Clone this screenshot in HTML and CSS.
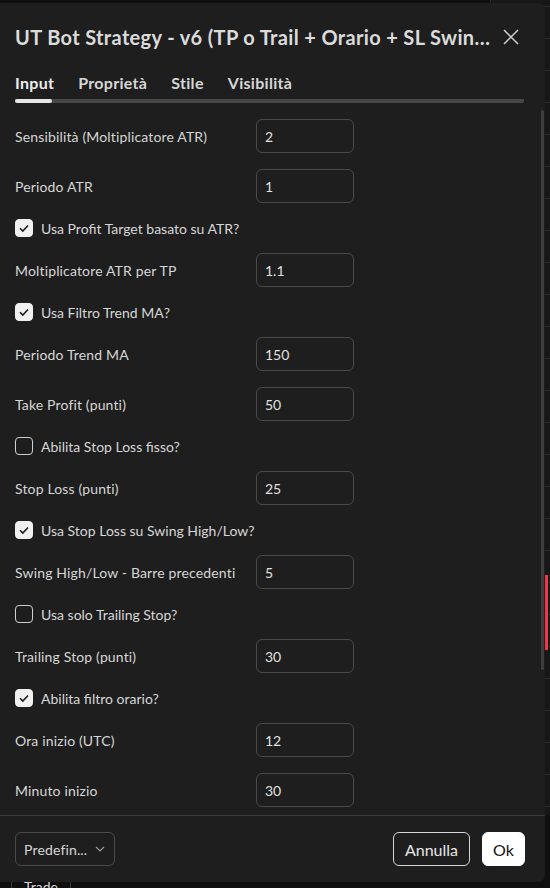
FILE: index.html
```html
<!DOCTYPE html>
<html lang="it">
<head>
    <meta charset="UTF-8">
    <title>Impostazioni - UT Bot Strategy</title>
    <link rel="stylesheet" href="styles.css">
</head>
<body>
<div class="chart">
    <div class="price-scale"></div>
    <span class="candle"></span>
    <div class="bottom-tabs">
        <span class="bottom-tab">Trade</span>
    </div>
</div>

<div class="dialog">
    <div class="head">
        <h1 class="title">UT Bot Strategy - v6 (TP o Trail + Orario + SL Swing High/Low)</h1>
        <button class="close" title="Chiudi">
            <svg width="16" height="16" viewBox="0 0 16 16"><path d="M1 1L15 15M15 1L1 15" stroke="currentColor" stroke-width="1.5" fill="none"/></svg>
        </button>
    </div>

    <div class="tabs">
        <span class="tab on">Input</span>
        <span class="tab">Proprietà</span>
        <span class="tab">Stile</span>
        <span class="tab">Visibilità</span>
    </div>

    <div class="body">
        <div class="row"><label>Sensibilità (Moltiplicatore ATR)</label><input class="field" value="2"></div>
        <div class="row"><label>Periodo ATR</label><input class="field" value="1"></div>
        <div class="check"><span class="box on"></span>Usa Profit Target basato su ATR?</div>
        <div class="row"><label>Moltiplicatore ATR per TP</label><input class="field" value="1.1"></div>
        <div class="check"><span class="box on"></span>Usa Filtro Trend MA?</div>
        <div class="row"><label>Periodo Trend MA</label><input class="field" value="150"></div>
        <div class="row"><label>Take Profit (punti)</label><input class="field" value="50"></div>
        <div class="check"><span class="box"></span>Abilita Stop Loss fisso?</div>
        <div class="row"><label>Stop Loss (punti)</label><input class="field" value="25"></div>
        <div class="check"><span class="box on"></span>Usa Stop Loss su Swing High/Low?</div>
        <div class="row"><label>Swing High/Low - Barre precedenti</label><input class="field" value="5"></div>
        <div class="check"><span class="box"></span>Usa solo Trailing Stop?</div>
        <div class="row"><label>Trailing Stop (punti)</label><input class="field" value="30"></div>
        <div class="check"><span class="box on"></span>Abilita filtro orario?</div>
        <div class="row"><label>Ora inizio (UTC)</label><input class="field" value="12"></div>
        <div class="row"><label>Minuto inizio</label><input class="field" value="30"></div>
        <div class="scrollbar"></div>
    </div>

    <div class="foot">
        <div class="select"><span class="select-text">Predefin...</span>
            <svg width="10" height="6" viewBox="0 0 10 6"><path d="M1 1L5 5L9 1" stroke="currentColor" stroke-width="1.2" fill="none"/></svg>
        </div>
        <span class="spacer"></span>
        <button class="btn">Annulla</button>
        <button class="btn primary">Ok</button>
    </div>
</div>
</body>
</html>
```

FILE: styles.css
```css
*{margin:0;padding:0;box-sizing:border-box;}
body{width:550px;height:888px;overflow:hidden;background:#0f0f0f;
    font-family:Lato,"Noto Sans",sans-serif;color:#d6d6d6;position:relative;}

/* chart behind the dialog */
.chart{height:888px;position:relative;display:flex;justify-content:flex-end;}
.price-scale{width:60px;height:815px;border-left:1px solid #2a2a2a;
    background:#171717 repeating-linear-gradient(to bottom,transparent 0,transparent 6px,#2e2e2e 6px,#2e2e2e 7px,transparent 7px,transparent 32px);}
.candle{position:absolute;left:545px;top:575px;width:3px;height:75px;background:#f23645;}
.bottom-tabs{position:absolute;left:0;right:0;top:872px;height:30px;background:#0f0f0f;display:flex;padding-left:11px;}
.bottom-tab{border-left:1px solid #3a3a3a;border-right:1px solid #3a3a3a;width:60px;padding-top:6px;
    text-align:center;font-size:14px;color:#d6d6d6;}

.dialog{position:absolute;left:0;top:3px;width:545px;height:879px;background:#1e1e1e;
    border-radius:0 7px 7px 0;display:flex;flex-direction:column;overflow:hidden;}

.head{display:flex;align-items:center;padding:20px 26px 0 15px;height:48px;gap:9px;}
.title{flex:1;min-width:0;font-size:20px;font-weight:700;line-height:28px;color:#dbdbdb;letter-spacing:0.35px;
    white-space:nowrap;overflow:hidden;text-overflow:ellipsis;}
.close{width:16px;height:16px;background:none;border:0;color:#d0d0d0;cursor:pointer;display:flex;}

.tabs{display:flex;gap:24px;margin:22px 21px 0 15px;padding-bottom:6px;position:relative;
    border-bottom:4px solid #474747;border-radius:0 0 2px 2px;}
.tab{font-size:16px;font-weight:700;line-height:20px;letter-spacing:0.3px;color:#d6d6d6;position:relative;cursor:pointer;}
.tab.on{color:#ececec;}
.tab.on:after{content:"";position:absolute;left:0;right:2px;bottom:-10px;height:4px;border-radius:2px;background:#e6e6e6;}

.body{flex:1;overflow:hidden;position:relative;padding:16px 0 0 15px;display:flex;flex-direction:column;gap:16px;}
.row{display:grid;grid-template-columns:241px 98px;align-items:center;font-size:14px;letter-spacing:0.15px;}
.row label{color:#d6d6d6;}
.field{height:34px;border:1px solid #4a4a4a;border-radius:6px;background:transparent;
    color:#e0e0e0;font:14px Lato,"Noto Sans",sans-serif;padding:0 8px;outline:none;}
.check{display:flex;align-items:center;gap:8px;height:18px;font-size:14px;color:#d6d6d6;}
.box{width:18px;height:18px;border:1.5px solid #d0d0d0;border-radius:4px;flex:none;}
.box.on{background:#f0f0f0 url("data:image/svg+xml;utf8,<svg xmlns='http://www.w3.org/2000/svg' width='18' height='18'><path d='M5 9.2L7.8 12L13 6.5' stroke='%231e1e1e' stroke-width='1.6' fill='none'/></svg>") center no-repeat;border-color:#f0f0f0;}
.scrollbar{position:absolute;right:1px;top:7px;width:3px;height:560px;background:#3d3d3d;border-radius:2px;}

.foot{border-top:1px solid #3a3a3a;padding:16px 20px 16px 15px;display:flex;align-items:center;gap:12px;}
.select{width:100px;height:34px;border:1px solid #4a4a4a;border-radius:6px;display:flex;align-items:center;
    justify-content:space-between;padding:0 9px 0 8px;font-size:14px;letter-spacing:0.15px;color:#d6d6d6;}
.select svg{color:#9a9a9a;flex:none;}
.spacer{flex:1;}
.btn{height:34px;padding:0 11px;border:1px solid #d6d6d6;border-radius:6px;background:transparent;
    color:#e6e6e6;font:16px Lato,"Noto Sans",sans-serif;cursor:pointer;}
.btn.primary{background:#fff;border-color:#fff;color:#131313;width:43px;padding:0;}
```
